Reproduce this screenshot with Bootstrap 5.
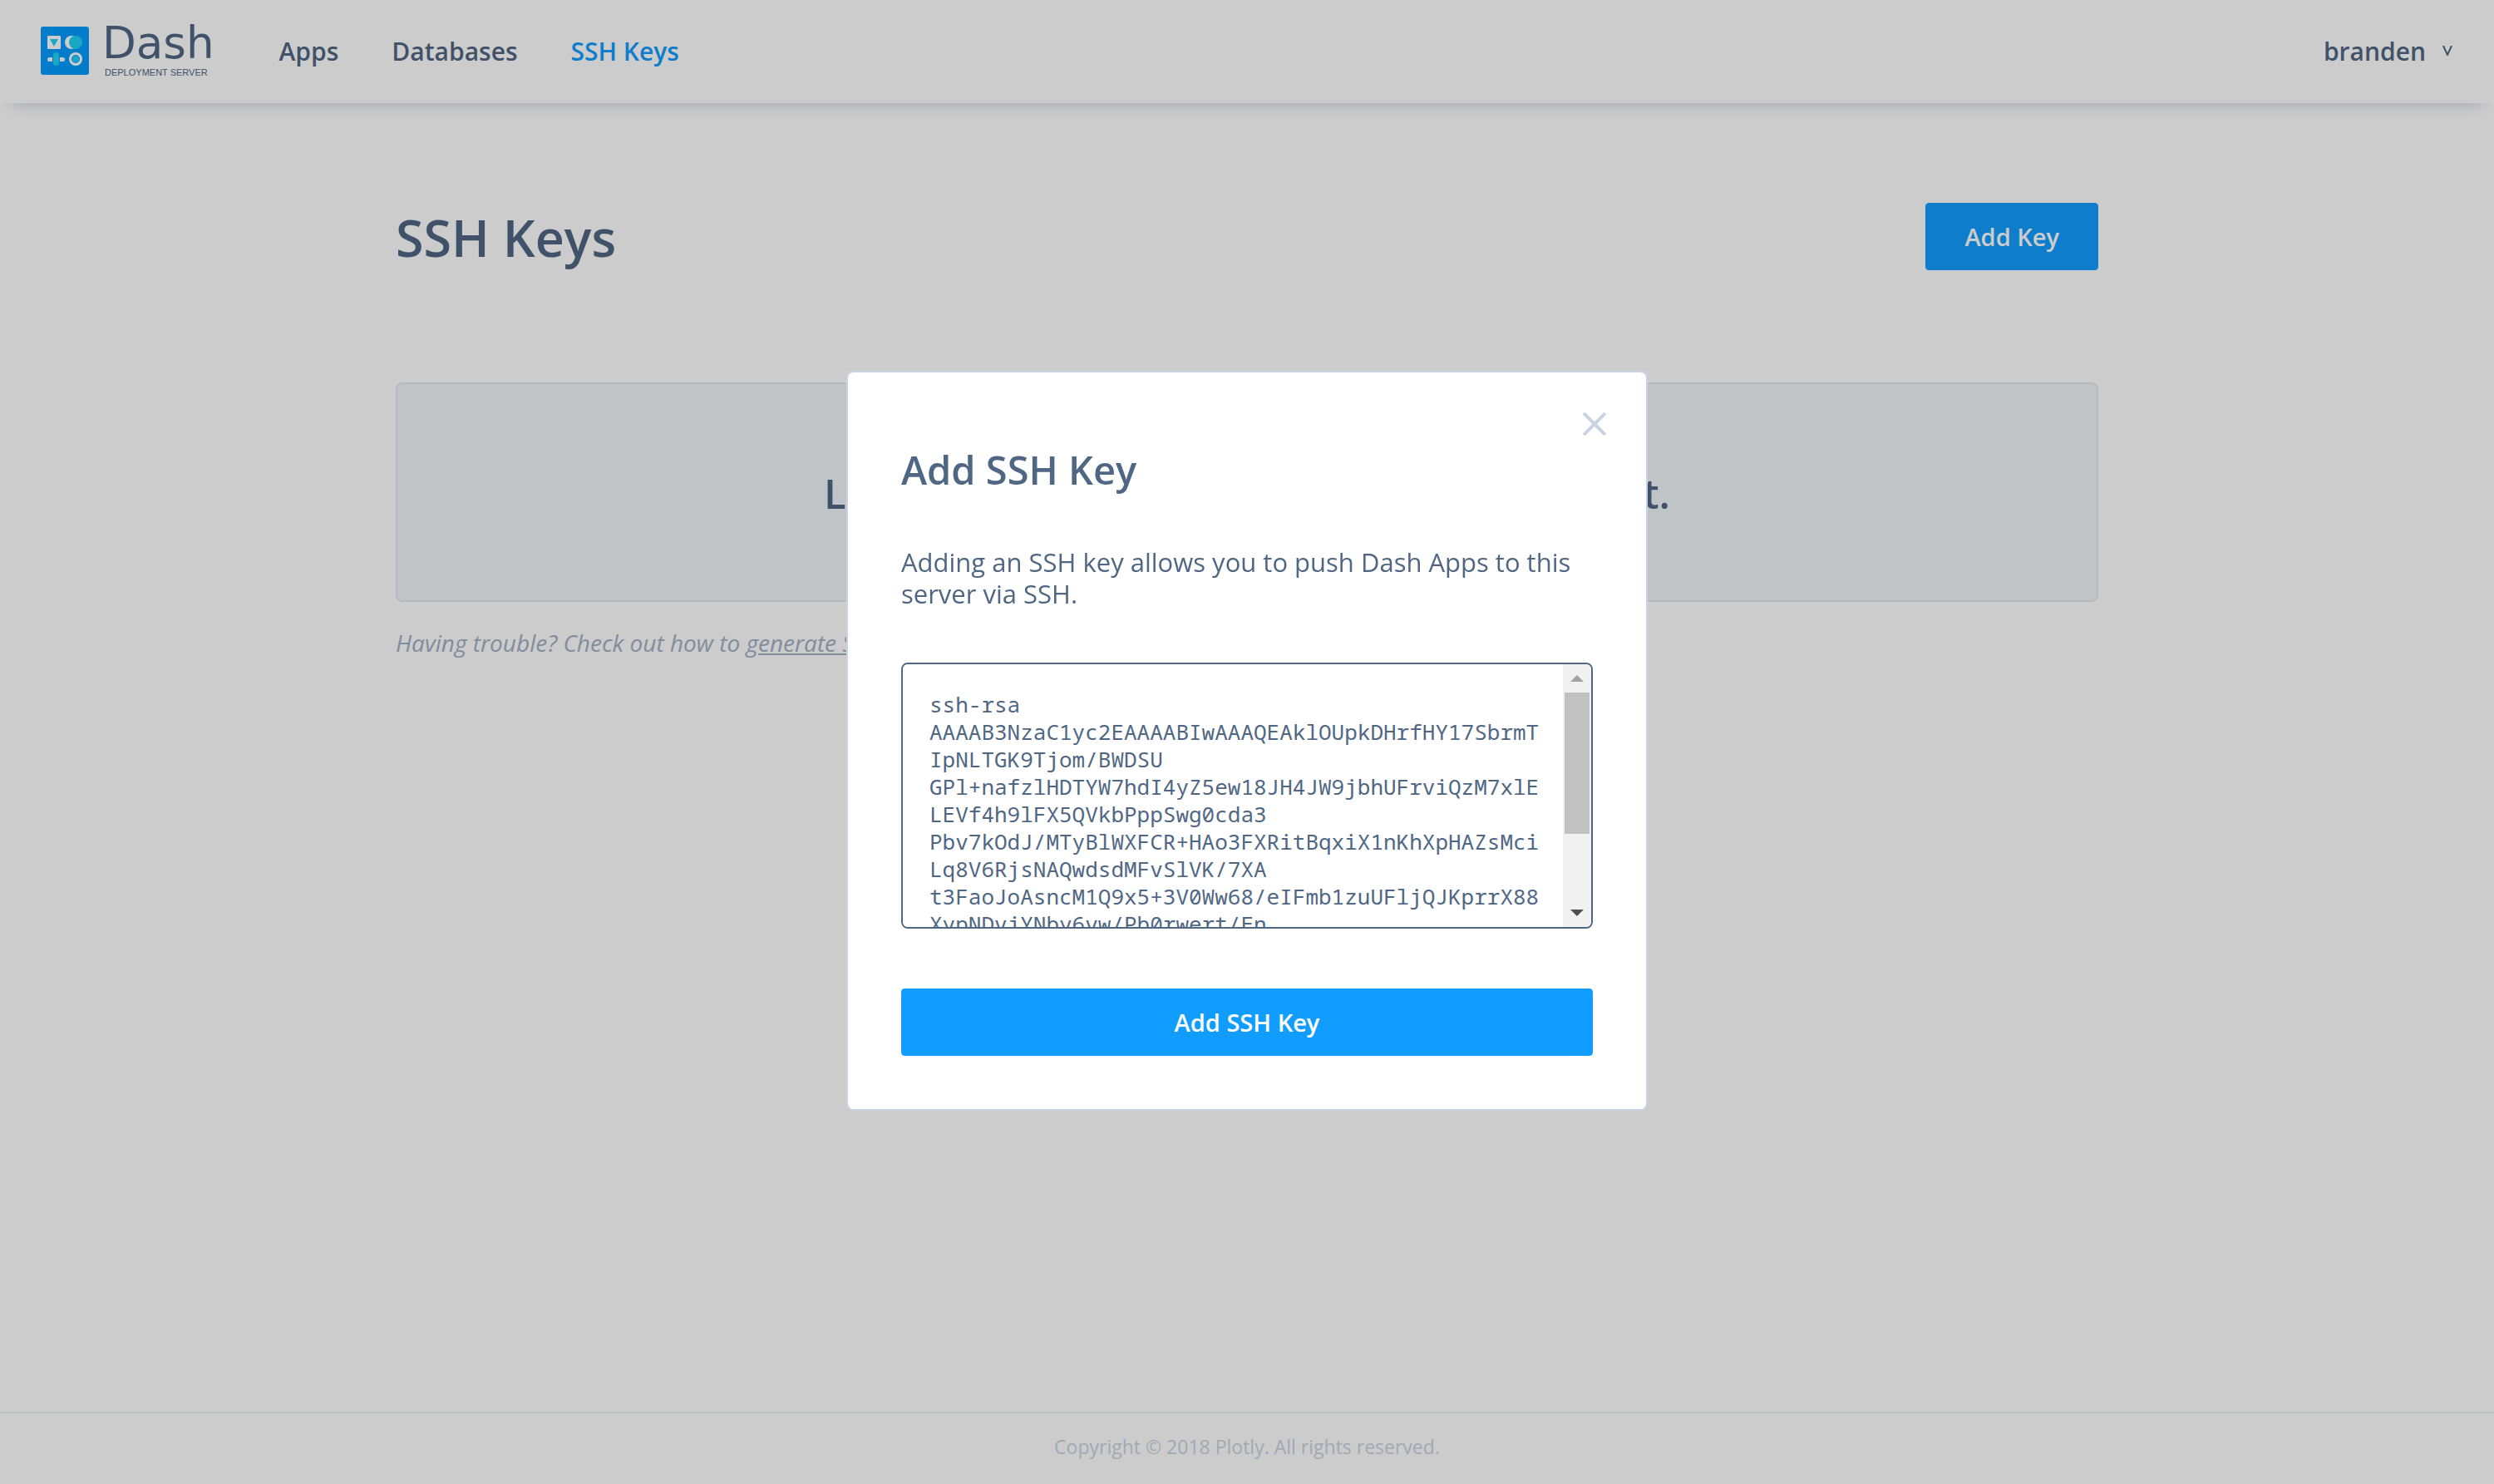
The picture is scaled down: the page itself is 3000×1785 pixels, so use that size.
<!DOCTYPE html>
<html lang="en">
<head>
<meta charset="utf-8">
<meta name="viewport" content="width=device-width, initial-scale=1">
<title>SSH Keys - Dash Deployment Server</title>
<link href="https://cdn.jsdelivr.net/npm/bootstrap@5.3.0/dist/css/bootstrap.min.css" rel="stylesheet">
<style>
  :root {
    --ink: #506784;
    --brand: #119dff;
    --line: #c8d4e3;
    --muted: #a2b1c6;
  }
  body {
    background: #fff;
    color: var(--ink);
    font-family: "Open Sans", "Noto Sans", sans-serif;
    font-size: 30px;
  }

  /* Top bar */
  .topbar {
    min-height: 124px;
    padding: 0 50px 2px 49px;
    background: #fff;
    box-shadow: 0 16px 16px -15px rgba(80, 90, 140, .3);
  }
  .brand-link { gap: 16px; margin-right: 78px; color: var(--ink); }
  .brand-name { font: 53px/52px "DejaVu Sans", sans-serif; }
  .brand-sub { padding-left: 3px; font: 11px/18px "Liberation Sans", sans-serif; }
  .main-nav { gap: 64px; }
  .main-nav .nav-link, .user-menu {
    padding: 0;
    color: var(--ink);
    font-size: 30px;
    font-weight: 600;
  }
  .main-nav .nav-link.active { color: var(--brand); }
  .user-menu { gap: 20px; border: 0; background: none; }

  /* Page */
  .page-body { width: 100%; max-width: 2048px; margin: 120px auto 0; }
  .page-head { margin-bottom: 132px; }
  .page-title { margin: 0; font-size: 61px; line-height: 84px; font-weight: 600; }
  .btn-brand {
    --bs-btn-color: #fff;
    --bs-btn-bg: var(--brand);
    --bs-btn-border-color: var(--brand);
    --bs-btn-hover-color: #fff;
    --bs-btn-hover-bg: #0d8ae0;
    --bs-btn-hover-border-color: #0d8ae0;
    --bs-btn-font-size: 29px;
    --bs-btn-font-weight: 600;
    --bs-btn-line-height: 41px;
    --bs-btn-padding-x: 46px;
    --bs-btn-padding-y: 19px;
    --bs-btn-border-radius: 4px;
  }
  .empty-box {
    min-height: 264px;
    padding-top: 4px;
    border: 2px solid #deeaf2;
    border-radius: 8px;
    background: #f1f6f9;
    font-size: 49px;
    font-weight: 600;
  }
  .help-line { margin: 30px 0 0; color: var(--muted); font-size: 28px; line-height: 38px; font-style: italic; }
  .help-line a { color: inherit; }
  .page-foot {
    padding: 24px 0 29px;
    border-top: 2px solid #ebf0f8;
    color: var(--line);
    font-size: 23px;
    line-height: 32px;
  }

  /* Dialog */
  .modal-backdrop { --bs-backdrop-opacity: .2; }
  .key-dialog { --bs-modal-width: 964px; padding-bottom: 3px; }
  .key-dialog .modal-content {
    padding: 89px 64px 64px;
    border: 2px solid var(--line);
    border-radius: 8px;
    color: var(--ink);
  }
  .close-x { position: absolute; top: 40px; right: 40px; padding: 8px; border: 0; background: none; line-height: 0; }
  .key-title { margin: 0 0 64px; font-size: 47px; line-height: 56px; font-weight: 600; }
  .key-text { margin: 0 0 64px; font-size: 31px; line-height: 38px; }
  .key-frame {
    height: 320px;
    margin-bottom: 72px;
    border: 2px solid var(--ink);
    border-radius: 8px;
    overflow: hidden;
  }
  .key-input {
    padding: 32px 16px 0 32px;
    border: 0;
    outline: 0;
    resize: none;
    scrollbar-width: none;
    color: var(--ink);
    font: 26px/33px "Noto Sans Mono", "DejaVu Sans Mono", monospace;
  }
  .scroll-track { width: 34px; background: #f1f1f1; }
  .scroll-end { height: 34px; }
  .scroll-thumb { width: 30px; height: 170px; background: #c1c1c1; }
</style>
</head>
<body class="d-flex flex-column min-vh-100">

<header class="topbar d-flex align-items-center">
  <a href="#" class="brand-link d-flex align-items-center text-decoration-none">
    <svg width="58" height="58" viewBox="0 0 58 58" aria-hidden="true">
      <rect width="58" height="58" rx="3" fill="#069cff"/>
      <rect x="8" y="11" width="16" height="16" rx="1" fill="#fff"/>
      <path d="M11 15h10l-5 9z" fill="#1ed2f5"/>
      <circle cx="37" cy="19" r="8" fill="#fff"/>
      <circle cx="42" cy="19" r="8" fill="#1ed2f5"/>
      <rect x="8" y="37" width="21" height="5" rx="2.500" fill="#fff"/>
      <rect x="14" y="31" width="9" height="17" rx="4" fill="#069cff"/>
      <rect x="15" y="31" width="7" height="16" rx="3.500" fill="#1ed2f5"/>
      <circle cx="42" cy="39" r="8" fill="#fff"/>
      <circle cx="42" cy="39" r="5" fill="#069cff"/>
      <circle cx="42" cy="39" r="4" fill="#1ed2f5"/>
    </svg>
    <span class="d-flex flex-column">
      <span class="brand-name">Dash</span>
      <span class="brand-sub">DEPLOYMENT SERVER</span>
    </span>
  </a>
  <nav class="main-nav nav">
    <a class="nav-link" href="#">Apps</a>
    <a class="nav-link" href="#">Databases</a>
    <a class="nav-link active" aria-current="page" href="#">SSH Keys</a>
  </nav>
  <button type="button" class="user-menu d-flex align-items-center ms-auto">
    branden
    <svg width="12" height="12" viewBox="0 0 12 12" fill="none" stroke="currentColor" stroke-width="2" aria-hidden="true"><path d="M1 0L6 11L11 0"/></svg>
  </button>
</header>

<main class="page-body">
  <div class="page-head d-flex justify-content-between align-items-start">
    <h1 class="page-title">SSH Keys</h1>
    <button type="button" class="btn btn-brand">Add Key</button>
  </div>
  <div class="empty-box d-flex align-items-center justify-content-center">Looks like you don't have any SSH keys yet.</div>
  <p class="help-line">Having trouble? Check out how to <a href="#">generate SSH keys</a>.</p>
</main>

<footer class="page-foot text-center mt-auto">Copyright © 2018 Plotly. All rights reserved.</footer>

<div class="modal-backdrop show w-100 h-100"></div>
<div class="modal show d-block" role="dialog" aria-modal="true" aria-labelledby="keyTitle">
  <div class="modal-dialog modal-dialog-centered key-dialog">
    <form class="modal-content">
      <button type="button" class="close-x" aria-label="Close">
        <svg width="28" height="28" viewBox="0 0 28 28" stroke="#c8d4e3" stroke-width="4" aria-hidden="true"><path d="M1 1L27 27M27 1L1 27"/></svg>
      </button>
      <h2 class="key-title" id="keyTitle">Add SSH Key</h2>
      <label class="key-text" for="keyInput">Adding an SSH key allows you to push Dash Apps to this server via SSH.</label>
      <div class="key-frame d-flex">
        <textarea class="key-input flex-grow-1" id="keyInput" spellcheck="false">ssh-rsa AAAAB3NzaC1yc2EAAAABIwAAAQEAklOUpkDHrfHY17SbrmTIpNLTGK9Tjom/BWDSU
GPl+nafzlHDTYW7hdI4yZ5ew18JH4JW9jbhUFrviQzM7xlELEVf4h9lFX5QVkbPppSwg0cda3
Pbv7kOdJ/MTyBlWXFCR+HAo3FXRitBqxiX1nKhXpHAZsMciLq8V6RjsNAQwdsdMFvSlVK/7XA
t3FaoJoAsncM1Q9x5+3V0Ww68/eIFmb1zuUFljQJKprrX88XypNDvjYNby6vw/Pb0rwert/En</textarea>
        <div class="scroll-track d-flex flex-column align-items-center" aria-hidden="true">
          <div class="scroll-end d-flex align-items-center"><svg width="16" height="8" viewBox="0 0 16 8"><path d="M0 8L8 0L16 8z" fill="#a3a3a3"/></svg></div>
          <div class="scroll-thumb"></div>
          <div class="scroll-end d-flex align-items-center mt-auto"><svg width="16" height="8" viewBox="0 0 16 8"><path d="M0 0L8 8L16 0z" fill="#505050"/></svg></div>
        </div>
      </div>
      <button type="submit" class="btn btn-brand w-100">Add SSH Key</button>
    </form>
  </div>
</div>

<script src="https://cdn.jsdelivr.net/npm/bootstrap@5.3.0/dist/js/bootstrap.bundle.min.js"></script>
</body>
</html>
